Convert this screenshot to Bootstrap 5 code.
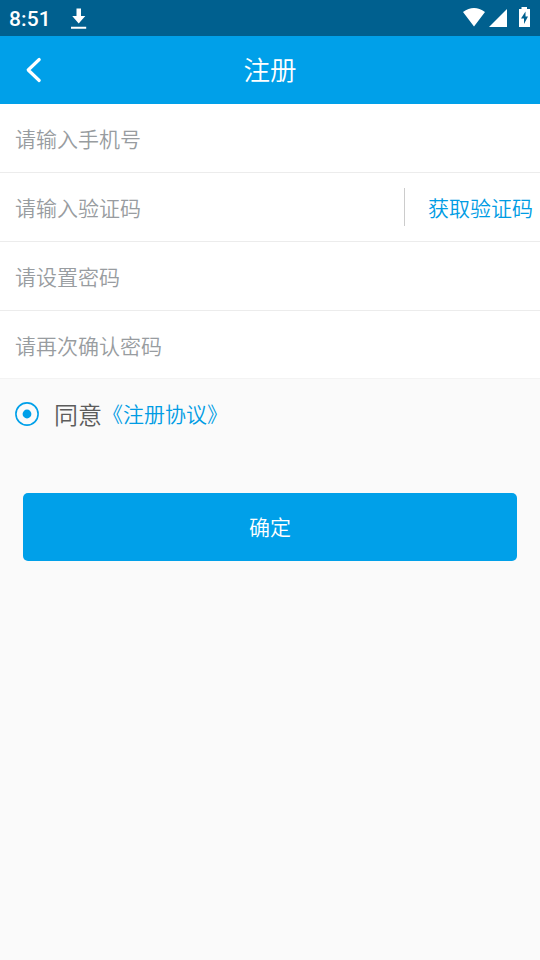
<!DOCTYPE html>
<html lang="zh-CN">
<head>
<meta charset="utf-8">
<meta name="viewport" content="width=device-width, initial-scale=1">
<title>注册</title>
<link href="https://cdn.jsdelivr.net/npm/bootstrap@5.3.0/dist/css/bootstrap.min.css" rel="stylesheet">
<style>
body{font-family:"Noto Sans CJK SC DemiLight","Noto Sans CJK SC",sans-serif;background:#fafafa;min-height:960px;overflow:hidden}
.status{height:36px;background:#00608f;font:500 21px/36px Roboto,sans-serif;padding-left:9px}
.status .clock{width:61px;padding-top:2px;letter-spacing:.1px}
.titlebar{height:68px;background:#00a0e9}
.titlebar h1{font-size:26.5px;font-weight:400;line-height:66px;height:68px}
.side{width:68px}
.field{height:69px;background:#fff;border-bottom:1px solid #ececec;padding:0 0 1px 15px}
.field.last-field{height:68px;padding-bottom:0;border-color:#f3f3f3}
.field input{font-size:21px;line-height:30px;height:66px;color:#555}
.field input::placeholder{color:#989ca0;opacity:1}
.code{width:136px;height:38px;border-left:1px solid #ccc;padding:0 8px 0 23px;font-size:21px;line-height:38px;color:#009ce4;white-space:nowrap;margin-top:1px}
.code span{display:block;margin-top:-1px}
.agree{height:70px;padding-left:15px;font-size:24px;color:#5c5c5c}
.agree a{font-size:21px;color:#009ce4}
.agree span{margin-left:15px}
.submit{height:68px;margin:44px 23px 0;background:#00a0e9;border-radius:5px;font-size:21px;color:#fff}
</style>
</head>
<body>
<header class="text-white">
<div class="status d-flex align-items-center">
<span class="clock">8:51</span>
<svg width="18" height="36" viewBox="70 0 18 36" fill="#fff"><path d="M76.500 8.500h4.500v7.500h4.300L78.700 23.500 72.200 16h4.300zM71 26.700h15.200v2H71z"/></svg>
<svg class="ms-auto" width="78" height="36" viewBox="462 0 78 36" fill="#fff"><path d="M463 12Q474 4 485 12L474 26.500ZM507 9V27H489ZM521.500 7h5.500v2h3v18h-11V9h2.500Z"/><path fill="#00608f" d="M525.500 11.500l-4.500 7h3v5.500l4-7.500h-2.500z"/></svg>
</div>
<nav class="titlebar d-flex align-items-center">
<div class="side d-flex justify-content-center"><svg width="20" height="28" viewBox="0 0 20 28" fill="none" stroke="#fff" stroke-width="3.200" stroke-linecap="round" stroke-linejoin="round"><path d="M15.200 3.500 4.200 14 15.200 24.500"/></svg></div>
<h1 class="flex-grow-1 text-center m-0">注册</h1><div class="side"></div>
</nav>
</header>
<main>
<form>
<div class="field d-flex align-items-center"><input class="border-0 p-0 flex-grow-1" type="tel" placeholder="请输入手机号"></div>
<div class="field d-flex align-items-center"><input class="border-0 p-0 flex-grow-1" placeholder="请输入验证码"><button type="button" class="code border-top-0 border-bottom-0 border-end-0 bg-transparent"><span>获取验证码</span></button></div>
<div class="field d-flex align-items-center"><input class="border-0 p-0 flex-grow-1" type="password" placeholder="请设置密码"></div>
<div class="field last-field d-flex align-items-center"><input class="border-0 p-0 flex-grow-1" type="password" placeholder="请再次确认密码"></div>
<div class="agree d-flex align-items-center"><svg width="24" height="24" viewBox="0 0 24 24"><circle cx="12" cy="12" r="11.100" fill="none" stroke="#00a0e9" stroke-width="1.600"/><circle cx="12" cy="12" r="4.400" fill="#00a0e9"/></svg><span>同意</span><a class="text-decoration-none" href="#">《注册协议》</a></div>
<div class="d-grid"><button type="button" class="submit border-0">确定</button></div>
</form>
</main>
<script src="https://cdn.jsdelivr.net/npm/bootstrap@5.3.0/dist/js/bootstrap.bundle.min.js"></script>
</body>
</html>
